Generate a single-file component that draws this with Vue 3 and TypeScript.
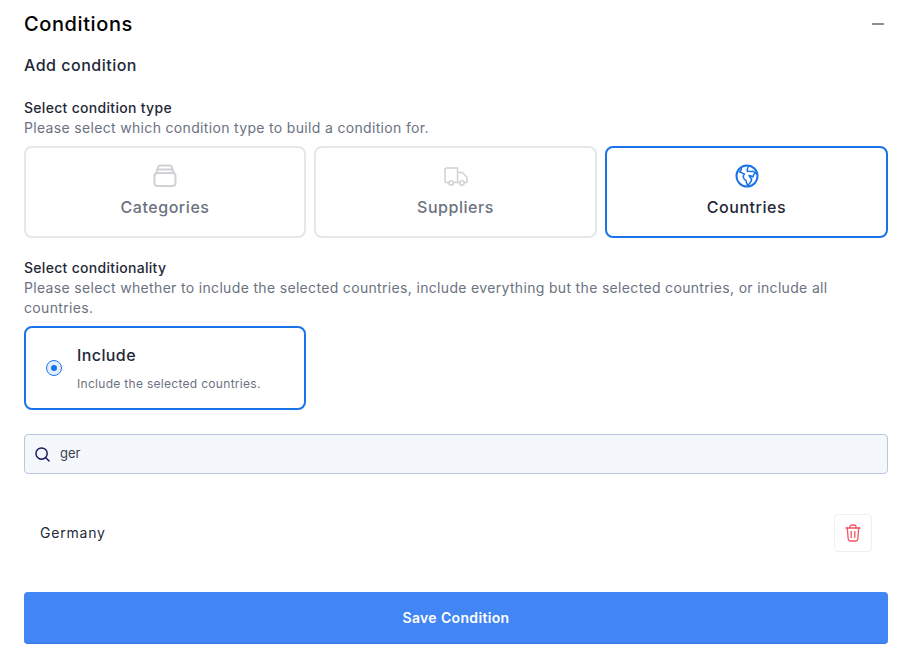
<script setup lang="ts">
interface TypeCard { label: string; icon: string; active: boolean }
const types: TypeCard[] = [
  { label: 'Categories', icon: 'box', active: false },
  { label: 'Suppliers', icon: 'truck', active: false },
  { label: 'Countries', icon: 'globe', active: true },
]
</script>

<template>
  <main class="page">
    <header class="head">
      <h1>Conditions</h1>
      <span class="minus"></span>
    </header>
    <h2>Add condition</h2>

    <h3 class="type-title">Select condition type</h3>
    <p class="hint">Please select which condition type to build a condition for.</p>
    <div class="types">
      <div v-for="t in types" :key="t.label" class="type" :class="{ active: t.active }">
        <svg class="ticon" viewBox="0 0 24 24" fill="none" stroke="currentColor" stroke-width="1.5" stroke-linecap="round" stroke-linejoin="round">
          <template v-if="t.icon === 'box'">
            <rect x="1.5" y="9" width="21" height="13" rx="3" stroke-width="2" />
            <path d="M3.5 9 L5 3.5 Q5.4 1.5 7.5 1.5 H16.5 Q18.600 1.500 19 3.5 L20.500 9" stroke-width="2" />
            <path d="M4.500 5.500 H19.500" stroke-width="2" />
          </template>
          <template v-else-if="t.icon === 'truck'">
            <path d="M5 18.500 H2.800 Q1 18.500 1 16.700 V6 Q1 4 3 4 H13.500 V18.500 H9.500" />
            <path d="M13.500 8.500 H18.500 L23 13.500 V18.500 H20.500 M15.500 18.500 H13.500" />
            <circle cx="7.200" cy="19" r="2.200" />
            <circle cx="18" cy="19" r="2.200" />
          </template>
          <template v-else>
            <circle cx="12" cy="12" r="10.500" stroke-width="2" />
            <path d="M6 3.500 C7 6 6 7 4.500 8 C7 8 7.500 10 9.500 10 C7 12 9 16 11 16.500 C11.500 19 12 21 13 21.500 C14.500 19.500 17 17.500 16.500 14.500 C15 14 14.500 12.500 14 11.500 C16 11.500 17 12.500 18 13 C18.500 11 18 9.500 21.500 9 C19 8.500 18 6.500 17 7.500 C15 8 14.500 6.500 12.500 7.500 C11.500 6 12.500 4 14 1.800" />
          </template>
        </svg>
        <span class="tlabel">{{ t.label }}</span>
      </div>
    </div>

    <h3 class="cond-title">Select conditionality</h3>
    <p class="hint wrap">Please select whether to include the selected countries, include everything but the selected countries, or include all countries.</p>
    <div class="cond-row">
      <div class="cond">
        <span class="radio"><span class="dot"></span></span>
        <div class="cond-text">
          <div class="cond-name">Include</div>
          <div class="cond-desc">Include the selected countries.</div>
        </div>
      </div>
    </div>

    <div class="search">
      <svg class="sicon" viewBox="0 0 16 16" fill="none" stroke="#14145a" stroke-width="1.500" stroke-linecap="round">
        <circle cx="7" cy="7" r="6" />
        <path d="M11.500 11.500 L15 15" />
      </svg>
      <span class="query">ger</span>
    </div>

    <div class="result">
      <span class="country">Germany</span>
      <button class="trash" type="button" aria-label="Delete">
        <svg viewBox="0 0 16 18" fill="none" stroke="#ef5561" stroke-width="1.300" stroke-linecap="round" stroke-linejoin="round">
          <path d="M1 4 H15" />
          <path d="M5 4 V3 Q5 1 7 1 H9 Q11 1 11 3 V4" />
          <path d="M2.300 4 L3.200 15 Q3.400 17 5.300 17 H10.700 Q12.600 17 12.800 15 L13.700 4" />
          <path d="M6.200 7.500 V13.500 M9.800 7.500 V13.500" />
        </svg>
      </button>
    </div>

    <button class="save" type="button">Save Condition</button>
  </main>
</template>

<style scoped>
.page {
  box-sizing: border-box;
  width: 917px;
  height: 655px;
  padding: 0 29px 0 24px;
  overflow: hidden;
  font-family: Inter, "Open Sans", sans-serif;
  color: #111827;
  background: #fff;
}
h1, h2, h3, p { margin: 0; font-weight: 500; }
.head {
  display: flex;
  align-items: center;
  justify-content: space-between;
  height: 24px;
  margin-top: 12px;
  padding-right: 4px;
}
h1 { font-size: 20px; line-height: 24px; color: #000; letter-spacing: 0.6px; }
.minus { width: 12px; height: 2px; background: #8e8e96; }
h2 { margin-top: 18px; font-size: 16px; line-height: 22px; color: #1f2937; letter-spacing: 0.5px; }
h3 { font-size: 14px; line-height: 20px; color: #1f2937; letter-spacing: 0.3px; }
.type-title { margin-top: 22px; }
.hint { font-size: 14px; font-weight: 400; line-height: 20px; color: #6b7280; letter-spacing: 0.33px; }
.types { display: grid; grid-template-columns: 282px 283px 283px; gap: 8px; margin-top: 8px; }
.type {
  box-sizing: border-box;
  height: 92px;
  display: flex;
  flex-direction: column;
  align-items: center;
  border: 2px solid #e5e7eb;
  border-radius: 8px;
  color: #d0d1d5;
  padding-top: 16px;
}
.type.active { border-color: #1a73e8; color: #1a73e8; }
.ticon { width: 24px; height: 24px; }
.tlabel { margin-top: 8px; font-size: 16px; line-height: 22px; font-weight: 500; color: #6b7280; letter-spacing: 0.55px; }
.type.active .tlabel { color: #1f2937; }
.cond-title { margin-top: 20px; }
.cond-row { display: grid; grid-template-columns: 282px 283px 283px; gap: 8px; margin-top: 8px; }
.cond {
  box-sizing: border-box;
  height: 84px;
  display: flex;
  align-items: center;
  gap: 15px;
  padding-left: 20px;
  border: 2px solid #1a73e8;
  border-radius: 8px;
}
.radio {
  width: 16px;
  height: 16px;
  box-sizing: border-box;
  display: flex;
  align-items: center;
  justify-content: center;
  border: 1px solid #1a73e8;
  border-radius: 50%;
  background: #e3edfb;
}
.dot { width: 6px; height: 6px; border-radius: 50%; background: #1a73e8; }
.cond-name { font-size: 16px; line-height: 22px; font-weight: 500; color: #1f2937; letter-spacing: 0.4px; }
.cond-desc { margin-top: 10px; font-size: 12px; line-height: 16px; color: #6b7280; letter-spacing: 0.3px; }
.search {
  box-sizing: border-box;
  height: 40px;
  margin-top: 24px;
  display: flex;
  align-items: center;
  gap: 10px;
  padding-left: 10px;
  background: #f4f7fb;
  border: 1px solid #b8c9dd;
  border-radius: 4px;
}
.sicon { width: 15px; height: 15px; }
.query { font-size: 13px; line-height: 16px; padding-bottom: 2px; color: #374151; }
.result {
  height: 38px;
  margin-top: 40px;
  display: flex;
  align-items: center;
  justify-content: space-between;
  padding: 0 16px;
}
.country { font-size: 14px; line-height: 20px; padding-bottom: 1px; color: #1f2937; letter-spacing: 0.8px; }
.trash {
  box-sizing: border-box;
  width: 38px;
  height: 38px;
  padding: 0;
  display: flex;
  align-items: center;
  justify-content: center;
  background: #fff;
  border: 1px solid #f0f0f2;
  border-radius: 4px;
}
.trash svg { width: 16px; height: 18px; }
.save {
  display: block;
  width: 100%;
  height: 52px;
  margin-top: 40px;
  padding: 0;
  border: 0;
  border-bottom: 1px solid #3a74dc;
  border-radius: 4px;
  background: #4285f4;
  color: #fff;
  font-family: inherit;
  font-size: 14px;
  font-weight: 600;
  letter-spacing: 0.35px;
}
</style>
